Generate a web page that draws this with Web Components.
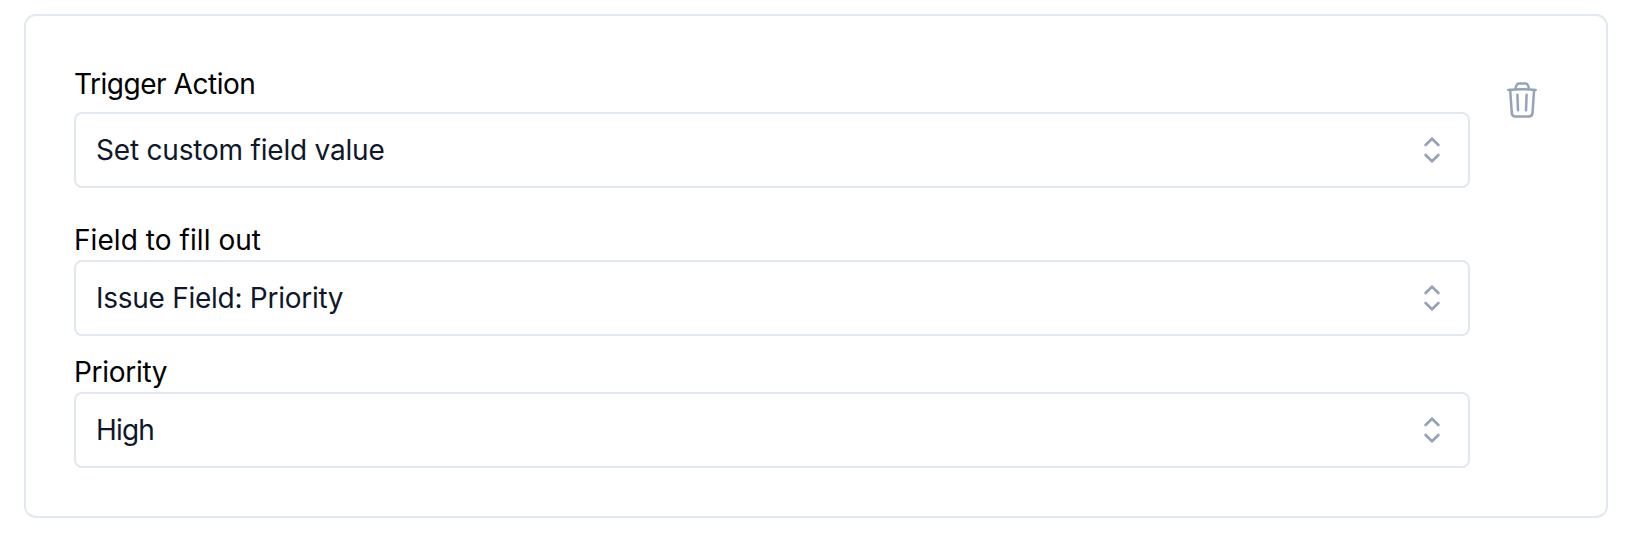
<!DOCTYPE html>
<html lang="en">
<head>
<meta charset="utf-8">
<title>Trigger Action</title>
<style>
  html, body { margin: 0; background: #fff; }
  body { font-family: Inter, "Liberation Sans", sans-serif; font-size: 28px; line-height: 36px; font-weight: 430; padding: 14px 30px 20px 24px; }
</style>
</head>
<body>
<action-card>
  <select-field label="Trigger Action" value="Set custom field value" style="--gap:10px;--label-track:-.47px;--value-track:-.2px"></select-field>
  <select-field label="Field to fill out" value="Issue Field: Priority" style="--top:34px;--label-track:.06px;--value-track:-.27px"></select-field>
  <select-field label="Priority" value="High" style="--top:18px;--label-track:-.3px;--value-track:-.8px"></select-field>
  <trash-button slot="action"></trash-button>
</action-card>
<script>
customElements.define('action-card', class extends HTMLElement {
  constructor() {
    super();
    this.attachShadow({ mode: 'open' }).innerHTML = `
      <style>
        :host { display: flex; box-sizing: border-box; height: 504px; padding: 50px 66px 48px 48px; gap: 34px; border: 2px solid #e2e8f0; border-radius: 12px; background: #fff; }
        .fields { flex: 1; }
      </style>
      <div class="fields"><slot></slot></div>
      <slot name="action"></slot>`;
  }
});
customElements.define('select-field', class extends HTMLElement {
  constructor() {
    super();
    this.attachShadow({ mode: 'open' }).innerHTML = `
      <style>
        :host { display: block; margin-top: var(--top, 0); white-space: nowrap; }
        .label { display: block; width: max-content; color: #000; margin-bottom: var(--gap, 2px); letter-spacing: var(--label-track); }
        .box { display: flex; align-items: center; justify-content: space-between; box-sizing: border-box; height: 76px; padding: 0 26px 0 20px; border: 2px solid #e2e8f0; border-radius: 8px; color: #0f172a; }
        .value { letter-spacing: var(--value-track); }
        svg { display: block; fill: none; stroke: #94a3b8; stroke-width: 2.7; stroke-linecap: round; stroke-linejoin: round; }
      </style>
      <span class="label"></span>
      <div class="box"><span class="value"></span>
        <svg width="20" height="28" viewBox="0 0 20 28"><path d="M3.6 9 10 2.7 16.4 9M3.6 19 10 25.3 16.4 19"/></svg>
      </div>`;
  }
  connectedCallback() {
    this.shadowRoot.querySelector('.label').textContent = this.getAttribute('label');
    this.shadowRoot.querySelector('.value').textContent = this.getAttribute('value');
  }
});
customElements.define('trash-button', class extends HTMLElement {
  constructor() {
    super();
    this.attachShadow({ mode: 'open' }).innerHTML = `
      <style>
        :host { display: block; padding-top: 14px; width: 36px; }
        svg { display: block; fill: none; stroke: #94a3b8; stroke-width: 2.5; stroke-linecap: round; stroke-linejoin: round; }
      </style>
      <svg width="36" height="40" viewBox="0 0 36 40">
        <path d="M4.3 9.9Q18 8.4 31.7 9.9"/>
        <path d="M11.6 8.6Q12 3.6 15 3.4H21.4Q24.4 3.6 24.8 8.6"/>
        <path d="M6.2 10 7.8 33.2Q8 36.5 11.4 36.5H25Q28.2 36.5 28.5 33.2L30.1 10"/>
        <path d="M13.4 14.8 14 30.2M22.6 14.8 22 30.2"/>
      </svg>`;
  }
});
</script>
</body>
</html>
